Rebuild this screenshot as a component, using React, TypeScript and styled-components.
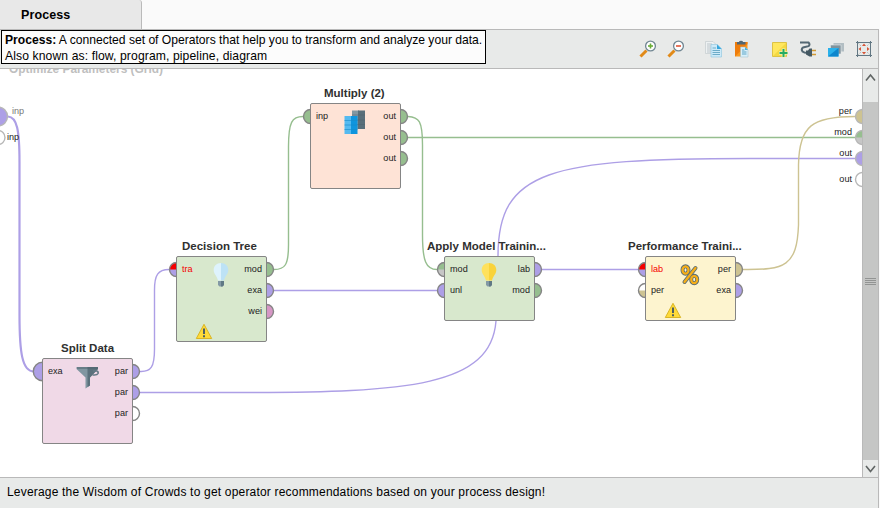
import React from "react";
import styled, { createGlobalStyle } from "styled-components";

const GlobalStyle = createGlobalStyle`
  * { box-sizing: border-box; }
  body { margin: 0; background: #fafafa; font-family: "Liberation Sans", Arial, sans-serif; overflow: hidden; }
`;

const C = {
  violet: "#ad9fe6",
  green: "#96be8f",
  tan: "#cdc392",
  pink: "#d697c5",
  white: "#ffffff",
  red: "#f50000",
  grey: "#c6c6c6",
};

const Window = styled.div`
  width: 880px;
  height: 508px;
  display: flex;
  flex-direction: column;
  background: #fafafa;
`;
const TabBar = styled.div`
  height: 29px;
  display: flex;
`;
const Tab = styled.div`
  width: 142px;
  height: 29px;
  padding-left: 21px;
  background: #e8e8e8;
  border-right: 1px solid #bababa;
  border-top-right-radius: 3px;
  font: 700 12.5px/30px "Liberation Sans", Arial, sans-serif;
  color: #000;
  letter-spacing: 0.1px;
`;
const Panel = styled.div`
  width: 879px;
  height: 479px;
  display: flex;
  flex-direction: column;
  border-top: 1px solid #b9b9b9;
  border-right: 1px solid #b9b9b9;
  background: #e8eae9;
`;
const Toolbar = styled.div`
  height: 39px;
  flex: none;
  display: flex;
  justify-content: flex-end;
  align-items: center;
  padding-right: 5px;
  border-bottom: 1px solid #b9b9b9;
  position: relative;
`;
const IconButton = styled.span<{ $gap?: number }>`
  width: 18px;
  height: 18px;
  margin-left: ${(p) => p.$gap ?? 10}px;
  svg { display: block; }
`;
const Tooltip = styled.div`
  position: absolute;
  z-index: 5;
  left: 1px;
  top: 0;
  width: 485px;
  height: 34px;
  padding: 1px 3px;
  border: 1px solid #000;
  background: #fcfcfc;
  color: #000;
  font-size: 12.15px;
  line-height: 16px;
  white-space: nowrap;
`;
const Line = styled.div<{ $spacing: number }>`
  letter-spacing: ${(p) => p.$spacing}px;
`;
const Body = styled.div`
  height: 408px;
  flex: none;
  display: flex;
`;
const Canvas = styled.div`
  position: relative;
  width: 862px;
  height: 408px;
  overflow: hidden;
  background: #fff;
`;
const Layer = styled.svg`
  position: absolute;
  inset: 0;
`;
const Scrollbar = styled.div`
  width: 16px;
  display: flex;
  flex-direction: column;
  border-left: 1px solid #b9b9b9;
  background: #e8eae9;
`;
const ScrollEnd = styled.div<{ $h: number }>`
  height: ${(p) => p.$h}px;
  svg { display: block; }
`;
const Thumb = styled.div`
  flex: 1;
  display: flex;
  flex-direction: column;
  align-items: center;
  justify-content: center;
  gap: 1px;
  background: #c5c6c5;
`;
const Grip = styled.i`
  width: 11px;
  height: 1px;
  background: #929493;
`;
const Footer = styled.div`
  flex: 1;
  border-top: 1px solid #b9b9b9;
  padding-left: 7px;
  font-size: 12px;
  line-height: 29px;
  color: #000;
  letter-spacing: 0.19px;
  white-space: nowrap;
`;

const NodeBox = styled.div<{ $x: number; $y: number; $h: number; $fill: string }>`
  position: absolute;
  left: ${(p) => p.$x}px;
  top: ${(p) => p.$y - 69}px;
  width: 91px;
  height: ${(p) => p.$h}px;
  display: flex;
  justify-content: space-between;
  padding: 2px 4px 0 5px;
  border: 1px solid #858585;
  border-radius: 2px;
  background: ${(p) => p.$fill};
`;
const Title = styled.div<{ $left: number }>`
  position: absolute;
  left: ${(p) => p.$left}px;
  top: -19px;
  font: 700 11.5px/16px "Liberation Sans", Arial, sans-serif;
  color: #303030;
  white-space: nowrap;
`;
const Ports = styled.div<{ $right?: boolean }>`
  display: flex;
  flex-direction: column;
  text-align: ${(p) => (p.$right ? "right" : "left")};
`;
const PortName = styled.span<{ $red?: boolean }>`
  height: 21px;
  font: 9.1px/20px "Liberation Sans", Arial, sans-serif;
  color: ${(p) => (p.$red ? "#f50000" : "#222")};
`;
const Glyph = styled.svg<{ $x: number; $y: number }>`
  position: absolute;
  left: ${(p) => p.$x}px;
  top: ${(p) => p.$y}px;
`;
const EdgeName = styled.span<{ $x?: number; $right?: number; $y: number; $faint?: boolean }>`
  position: absolute;
  ${(p) => (p.$right !== undefined ? `right: ${p.$right}px;` : `left: ${p.$x}px;`)}
  top: ${(p) => p.$y - 69}px;
  font: 9.1px/12px "Liberation Sans", Arial, sans-serif;
  color: ${(p) => (p.$faint ? "#777" : "#222")};
`;
const ProcessName = styled.div`
  position: absolute;
  left: 9px;
  top: -8px;
  font: 700 11.9px/16px "Liberation Sans", Arial, sans-serif;
  color: #bfbfbf;
  white-space: nowrap;
`;

interface PortProps { x: number; y: number; r?: number; fill: string; top?: string; stroke?: string }
const Port = ({ x, y, r = 7, fill, top, stroke = "#858585" }: PortProps) => (
  <g>
    <circle cx={x} cy={y} r={r} fill={fill} />
    {top && <path d={`M${x - r} ${y}A${r} ${r} 0 0 1 ${x + r} ${y}Z`} fill={top} />}
    <circle cx={x} cy={y} r={r} fill="none" stroke={stroke} strokeWidth={1.4} />
  </g>
);

const Wires = () => (
  <Layer width="862" height="408" viewBox="0 69 862 408">
    <g fill="none" strokeWidth="1.4">
      <path d="M8 116.5C17 117 19.500 130 19.500 162V315C19.500 352 22 371.5 34 371.5" stroke={C.violet} strokeWidth="2.2" />
      <path d="M140 371.5C151 372 154.500 367 154.500 349V290C154.500 275 158 269.500 169 269.500" stroke={C.violet} />
      <path d="M140 392.500H240C410 392.500 491 386 496 321L498 256C498 170 550 158.500 750 158.500H855" stroke={C.violet} />
      <path d="M274 269.500C285 269.500 288.500 265 288.500 245V147C288.500 122 292 116.500 303 116.500" stroke={C.green} />
      <path d="M408 116.500C419 117 422.500 121 422.500 145V235C422.500 261 426 269.500 437 269.500" stroke={C.green} />
      <path d="M408 137.500H855" stroke={C.green} />
      <path d="M274 290.500H437M542 269.500H638" stroke={C.violet} />
      <path d="M743 269.500C785 270 797 266 798.500 225V165C799 126 812 116.500 855 116.500" stroke={C.tan} />
    </g>
    <Port x={-2} y={116.5} r={9.5} fill={C.violet} stroke="#b7b7b7" />
    <Port x={-2} y={137.5} r={7} fill={C.white} stroke="#b7b7b7" />
    <Port x={42.5} y={371.5} r={9.2} fill={C.violet} />
    <Port x={132.500} y={371.500} fill={C.violet} />
    <Port x={132.500} y={392.500} fill={C.violet} />
    <Port x={132.500} y={413.500} fill={C.white} />
    <Port x={176.500} y={269.500} fill={C.violet} top={C.red} />
    <Port x={266.500} y={269.500} fill={C.green} />
    <Port x={266.500} y={290.500} fill={C.violet} />
    <Port x={266.500} y={311.500} fill={C.pink} />
    <Port x={310.500} y={116.500} fill={C.green} />
    <Port x={400.500} y={116.500} fill={C.green} />
    <Port x={400.500} y={137.500} fill={C.green} />
    <Port x={400.500} y={158.500} fill={C.green} />
    <Port x={444.500} y={269.500} fill={C.grey} top={C.green} />
    <Port x={444.500} y={290.500} fill={C.violet} />
    <Port x={534.500} y={269.500} fill={C.violet} />
    <Port x={534.500} y={290.500} fill={C.green} />
    <Port x={645.500} y={269.500} fill={C.violet} top={C.red} />
    <Port x={645.500} y={290.500} fill={C.tan} top={C.white} />
    <Port x={735.500} y={269.500} fill={C.tan} />
    <Port x={735.500} y={290.500} fill={C.violet} />
    <Port x={862.500} y={116.500} fill={C.tan} stroke="#b7b7b7" />
    <Port x={862.500} y={137.500} fill={C.grey} top={C.green} stroke="#b7b7b7" />
    <Port x={862.500} y={158.500} fill={C.violet} stroke="#b7b7b7" />
    <Port x={862.500} y={179.500} fill={C.white} stroke="#b7b7b7" />
  </Layer>
);

const Bulb = ({ x, left, right }: { x: number; left: string; right: string }) => (
  <Glyph $x={x} $y={5} width="16" height="26" viewBox="0 0 16 26">
    <path d="M8 1C3.500 1 .7 4.200.7 8C.7 12 4 14 5 18.500H8Z" fill={left} />
    <path d="M8 1C12.500 1 15.300 4.200 15.300 8C15.300 12 12 14 11 18.500H8Z" fill={right} />
    <path d="M5 19H11V23L9.500 24.500H6.500L5 23Z" fill="#8399a5" />
    <path d="M8 19H11V23L9.500 24.500H8Z" fill="#607985" />
  </Glyph>
);
const Warning = ({ x, y }: { x: number; y: number }) => (
  <Glyph $x={x} $y={y} width="18" height="17" viewBox="0 0 18 17">
    <path d="M9 1.300L16.700 15.500H1.300Z" fill="#ffda38" stroke="#d9b526" strokeLinejoin="round" />
    <path d="M9 5.500V11M9 12.200V14.200" stroke="#475a66" strokeWidth="1.900" />
  </Glyph>
);
const Servers = () => (
  <Glyph $x={33} $y={6} width="22" height="25" viewBox="0 0 22 25">
    <path d="M8 .5H15V19H8Z" fill="#8297a2" /><path d="M14 .5H21V19H14Z" fill="#596f7a" />
    <path d="M8 5H21M8 10H21M8 14.500H21" stroke="#4e626c" strokeWidth=".5" />
    <path d="M.5 6H7V24H.5Z" fill="#55baf0" /><path d="M7 6H13.500V24H7Z" fill="#0e95de" />
    <path d="M.5 10.500H13.500M.5 15H13.500M.5 19.500H13.500" stroke="#168bca" strokeWidth=".6" />
  </Glyph>
);
const Funnel = () => (
  <Glyph $x={33} $y={7} width="24" height="24" viewBox="0 0 24 24">
    <path d="M.5 1H22V3L14 11.500V19.500L9.500 22.500V11.500L.5 3Z" fill="#8196a1" />
    <path d="M11.500 1H22V3L14 11.500V19.500L11.500 21Z" fill="#5b717c" />
    <path d="M1 2H22" stroke="#4f656f" />
    <path d="M17 5H20.500Q22.500 5 22 7.500Q21.300 9 18.500 9H16.500" fill="none" stroke="#637985" strokeWidth="1.700" />
  </Glyph>
);
const Percent = () => (
  <Glyph $x={34} $y={7} width="20" height="22" viewBox="0 0 20 22">
    <g fill="none" strokeLinecap="round">
      <g stroke="#566b76" strokeWidth="4">
        <ellipse cx="5.500" cy="6" rx="3" ry="3.700" /><ellipse cx="14.200" cy="15.500" rx="3" ry="3.700" /><path d="M15.500 4L4.500 18" />
      </g>
      <g stroke="#f6ae18" strokeWidth="2.300">
        <ellipse cx="5.500" cy="6" rx="3" ry="3.700" /><ellipse cx="14.200" cy="15.500" rx="3" ry="3.700" /><path d="M15.500 4L4.500 18" />
      </g>
    </g>
  </Glyph>
);

interface OperatorProps {
  title: string; titleLeft: number; x: number; y: number; h: number; fill: string;
  inputs: string[]; outputs: string[]; missing?: string; children?: React.ReactNode;
}
const Operator = ({ title, titleLeft, x, y, h, fill, inputs, outputs, missing, children }: OperatorProps) => (
  <NodeBox $x={x} $y={y} $h={h} $fill={fill}>
    <Title $left={titleLeft}>{title}</Title>
    <Ports>{inputs.map((n) => <PortName key={n} $red={n === missing}>{n}</PortName>)}</Ports>
    {children}
    <Ports $right>{outputs.map((n, i) => <PortName key={i}>{n}</PortName>)}</Ports>
  </NodeBox>
);

const Magnifier = ({ plus }: { plus?: boolean }) => (
  <svg width="18" height="18" viewBox="0 0 18 18">
    <path d="M1.500 16.500L7.500 10.500" stroke="#e18a18" strokeWidth="3" />
    <circle cx="11.500" cy="6" r="4.900" fill="#fff" stroke="#708692" strokeWidth="1.300" />
    <path d="M9 6H14" stroke={plus ? "#69ad36" : "#e15335"} strokeWidth="1.600" />
    {plus && <path d="M11.500 3.500V8.500" stroke="#69ad36" strokeWidth="1.600" />}
  </svg>
);
const CopyIcon = () => (
  <svg width="18" height="18" viewBox="0 0 18 18">
    <path d="M.5 1.500H8L11 4.500V13.500H.5Z" fill="#edf1f2" stroke="#c4cccf" strokeWidth=".7" />
    <path d="M2 4H7M2 6H8M2 8H8M2 10H8M2 12H8" stroke="#b0bbc0" strokeWidth=".8" />
    <path d="M6 4.500H12.500L16.500 8.500V17H6Z" fill="#cdeaf8" stroke="#8bc5df" strokeWidth=".6" />
    <path d="M12 4.500V9H16.500Z" fill="#35a6dc" />
    <path d="M7.500 8H11M7.500 10.500H15M7.500 12.500H15M7.500 14.500H15" stroke="#6dacc9" />
  </svg>
);
const PasteIcon = () => (
  <svg width="18" height="18" viewBox="0 0 18 18">
    <path d="M2 2H14.500V16.500H2Z" fill="#f89a22" /><path d="M2 16.500L14.500 4V2H2Z" fill="#ef7d0c" />
    <path d="M4 4.500V2H6Q6 .8 8 .8Q10 .8 10 2H12.500V4.500Z" fill="#536773" />
    <path d="M7.500 7H12L15 10V17H7.500Z" fill="#d8f0fa" stroke="#9cbcc9" strokeWidth=".5" />
    <path d="M9 10H11.500M9 12H13.500M9 14H13.500" stroke="#5ca5c6" /><path d="M12 7V10H15Z" fill="#46b2e2" />
  </svg>
);
const NoteIcon = () => (
  <svg width="18" height="18" viewBox="0 0 18 18">
    <path d="M1.500 2.500H15.500V16.500H1.500Z" fill="#ffe75e" stroke="#ddc345" />
    <path d="M2 16L15 3V16Z" fill="#f4d942" />
    <path d="M12.500 8.500V17.500M8 13H17" stroke="#f8edae" strokeWidth="3.600" />
    <path d="M12.500 9V17M8.500 13H16.500" stroke="#25ad61" strokeWidth="2" />
  </svg>
);
const PlugIcon = () => (
  <svg width="18" height="18" viewBox="0 0 18 18">
    <path d="M1 2.500H9.500Q11.500 4.500 9.500 6.200L4 7.500Q1.800 9 3.500 11.500Q5 13 9 13" fill="none" stroke="#536773" strokeWidth="2" />
    <path d="M7 10.500H9L10.500 8.500H13V16.500H10.500L7 14.500Z" fill="#455963" />
    <path d="M13 10.500H17M13 14.500H17" stroke="#d29a34" strokeWidth="1.600" />
  </svg>
);
const LayersIcon = () => (
  <svg width="18" height="18" viewBox="0 0 18 18">
    <path d="M6.500 3H17V11.500H6.500Z" fill="#b2bec3" /><path d="M3.500 5H14V14H3.500Z" fill="#81939c" stroke="#e4e9eb" strokeWidth=".6" />
    <path d="M1 8H11.500V16.500H1Z" fill="#29b1eb" /><path d="M1 16.500L11.500 8V16.500Z" fill="#0d86cd" />
  </svg>
);
const FitIcon = () => (
  <svg width="18" height="18" viewBox="0 0 18 18">
    <path d="M2.500 1V17M15.500 1V17M1 2.500H17M1 15.500H17" stroke="#627783" fill="none" />
    <path d="M9 3.500L11 6H7ZM9 14.500L11 12H7ZM3.500 9L6 7V11ZM14.500 9L12 7V11Z" fill="#d65437" />
    <path d="M3.500 3.500L6 6M14.500 3.500L12 6M3.500 14.500L6 12M14.500 14.500L12 12" stroke="#9aa6ac" strokeDasharray="1 1" />
  </svg>
);

export default function App() {
  return (
    <Window>
      <GlobalStyle />
      <TabBar><Tab>Process</Tab></TabBar>
      <Panel>
        <Toolbar>
          <Tooltip>
            <Line $spacing={-0.015}><b>Process:</b> A connected set of Operators that help you to transform and analyze your data.</Line>
            <Line $spacing={0.11}>Also known as: flow, program, pipeline, diagram</Line>
          </Tooltip>
          <IconButton><Magnifier plus /></IconButton>
          <IconButton><Magnifier /></IconButton>
          <IconButton $gap={20}><CopyIcon /></IconButton>
          <IconButton><PasteIcon /></IconButton>
          <IconButton $gap={20}><NoteIcon /></IconButton>
          <IconButton><PlugIcon /></IconButton>
          <IconButton><LayersIcon /></IconButton>
          <IconButton><FitIcon /></IconButton>
        </Toolbar>
        <Body>
          <Canvas>
            <Wires />
            <ProcessName>Optimize Parameters (Grid)</ProcessName>
            <EdgeName $x={12} $y={105} $faint>inp</EdgeName>
            <EdgeName $x={7} $y={131}>inp</EdgeName>
            <EdgeName $right={10} $y={105}>per</EdgeName>
            <EdgeName $right={10} $y={126}>mod</EdgeName>
            <EdgeName $right={10} $y={147}>out</EdgeName>
            <EdgeName $right={10} $y={173}>out</EdgeName>
            <Operator title="Multiply (2)" titleLeft={13} x={310} y={103} h={86} fill="#fee3d6" inputs={["inp"]} outputs={["out", "out", "out"]}>
              <Servers />
            </Operator>
            <Operator title="Decision Tree" titleLeft={5} x={176} y={256} h={86} fill="#d8e8cd" inputs={["tra"]} outputs={["mod", "exa", "wei"]} missing="tra">
              <Bulb x={36} left="#def3fd" right="#bde2f5" />
              <Warning x={18} y={66} />
            </Operator>
            <Operator title="Split Data" titleLeft={18} x={42} y={358} h={86} fill="#f0d9e7" inputs={["exa"]} outputs={["par", "par", "par"]}>
              <Funnel />
            </Operator>
            <Operator title="Apply Model Trainin..." titleLeft={-18} x={444} y={256} h={65} fill="#d8e8cd" inputs={["mod", "unl"]} outputs={["lab", "mod"]}>
              <Bulb x={36} left="#ffe15c" right="#f9d33a" />
            </Operator>
            <Operator title="Performance Traini..." titleLeft={-18} x={645} y={256} h={65} fill="#fdf4cf" inputs={["lab", "per"]} outputs={["per", "exa"]} missing="lab">
              <Percent />
              <Warning x={18} y={45} />
            </Operator>
          </Canvas>
          <Scrollbar>
            <ScrollEnd $h={33}>
              <svg width="15" height="17" viewBox="0 0 15 17"><path d="M3 11.500L7.500 6L12 11.500" fill="none" stroke="#606564" strokeWidth="1.600" /></svg>
            </ScrollEnd>
            <Thumb><Grip /><Grip /><Grip /><Grip /></Thumb>
            <ScrollEnd $h={17}>
              <svg width="15" height="17" viewBox="0 0 15 17"><path d="M3 6L7.500 11.500L12 6" fill="none" stroke="#606564" strokeWidth="1.600" /></svg>
            </ScrollEnd>
          </Scrollbar>
        </Body>
        <Footer>Leverage the Wisdom of Crowds to get operator recommendations based on your process design!</Footer>
      </Panel>
    </Window>
  );
}
